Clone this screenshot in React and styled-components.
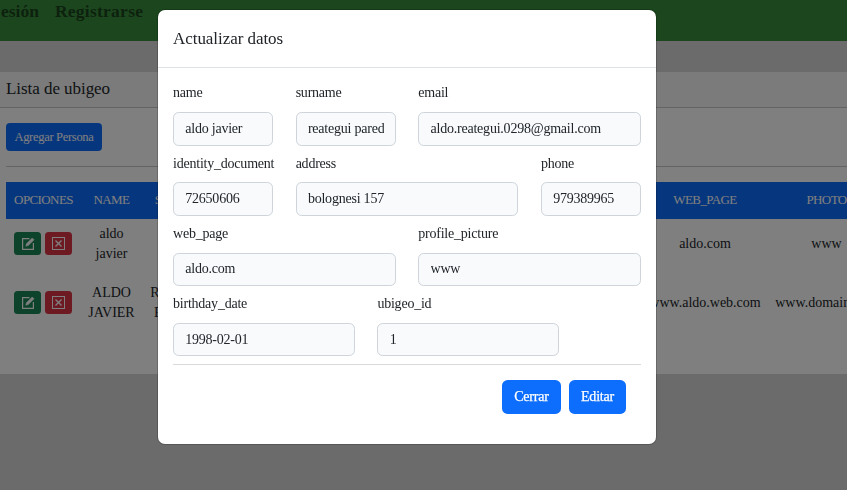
import React from "react";
import styled, { createGlobalStyle } from "styled-components";

const GlobalStyle = createGlobalStyle`
  *, *::before, *::after { box-sizing: border-box; }
  html, body { margin: 0; height: 490px; overflow: hidden; }
  body {
    background: #d6d6d6;
    color: #212529;
    font-family: "Liberation Serif", "Times New Roman", serif;
    font-size: 14px;
    line-height: 20.25px;
  }
`;

const Page = styled.div`
  width: 847px;
  height: 490px;
  overflow: hidden;
`;

const Navbar = styled.nav`
  height: 41px;
  display: flex;
  gap: 16px;
  background: #388e3c;
  color: #1b431d;
  font-size: 17.5px;
  font-weight: 700;
  line-height: 22px;
  white-space: nowrap;
`;

const NavLink = styled.a`
  letter-spacing: ${(p) => p.$spacing};
  margin-left: ${(p) => p.$shift || "0"};
`;

const Card = styled.section`
  margin-top: 31px;
  height: 302px;
  background: #fff;
`;

const CardHeader = styled.header`
  height: 36px;
  padding: 5px 6px 0;
  border-bottom: 1px solid #c8c8c8;
  background: #f7f7f7;
  font-size: 17px;
  line-height: 24px;
  letter-spacing: -0.05px;
`;

const CardBody = styled.div`
  padding: 15px 0 0 6px;
`;

const Toolbar = styled.div`
  height: 44px;
  border-bottom: 1px solid #c8c8c8;
  margin-bottom: 15px;
`;

const AddButton = styled.button`
  display: block;
  width: 96px;
  height: 28px;
  padding: 0;
  border: 0;
  border-radius: 4px;
  background: #0d6efd;
  color: #fff;
  font: 12.5px/28px "Liberation Serif", serif;
  letter-spacing: -0.3px;
`;

const Row = styled.div`
  display: grid;
  grid-template-columns: 75px 61px 85px 414px 128px 115px;
  width: 878px;
  height: ${(p) => p.$height};
  align-items: center;
  text-align: center;
  color: ${(p) => (p.$head ? "#fff" : "#212529")};
  background: ${(p) => (p.$head ? "#0d6efd" : "transparent")};
  font-size: ${(p) => (p.$head ? "13px" : "14px")};
  letter-spacing: ${(p) => (p.$head ? "-0.6px" : "normal")};
  padding-bottom: ${(p) => (p.$head ? "2px" : "0")};
`;

const Cell = styled.div`
  padding-top: 0.6px;
  white-space: pre-line;
`;

const Actions = styled.div`
  display: flex;
  gap: 4px;
  padding-left: 8px;
`;

const ActionButton = styled.button`
  display: flex;
  align-items: center;
  justify-content: center;
  width: 27px;
  height: 23px;
  padding: 0;
  border: 0;
  border-radius: 3.5px;
  color: #fff;
  background: ${(p) => (p.$danger ? "#dc3545" : "#198754")};
`;

const Backdrop = styled.div`
  position: fixed;
  inset: 0;
  display: flex;
  justify-content: flex-start;
  align-items: flex-start;
  padding: 10px 0 0 158px;
  background: rgba(0, 0, 0, 0.5);
`;

const Dialog = styled.div`
  width: 498px;
  height: 434px;
  border-radius: 7px;
  background: #fff;
  box-shadow: 0 0 0 1px rgba(0, 0, 0, 0.18);
`;

const DialogHeader = styled.header`
  height: 58px;
  padding: 17px 15px 0;
  border-bottom: 1px solid #dee2e6;
  font-size: 17px;
  line-height: 24px;
  letter-spacing: -0.05px;
`;

const Form = styled.form`
  margin: 0 15px;
  padding-top: 16.25px;
  height: 297px;
  display: grid;
  grid-template-columns: repeat(12, 18.375px);
  grid-auto-rows: 61.25px;
  column-gap: 22.5px;
  row-gap: 9px;
  border-bottom: 1px solid #d9dadb;
`;

const Field = styled.label`
  grid-column: span ${(p) => p.$span};
  min-width: 0;
  white-space: nowrap;
`;

const FieldName = styled.span`
  display: block;
  height: 20.25px;
  margin-bottom: 7.5px;
  line-height: 18.6px;
  letter-spacing: -0.22px;
`;

const Input = styled.input`
  display: block;
  width: 100%;
  height: 33.5px;
  padding: 0 11.25px;
  border: 1px solid #ced4da;
  border-radius: 5.6px;
  background: #f8fafc;
  color: #212529;
  font: 14px/20.25px "Liberation Serif", serif;
  letter-spacing: -0.22px;
  outline: 0;
`;

const DialogFooter = styled.footer`
  display: flex;
  justify-content: flex-end;
  gap: 8px;
  padding: 15px 30px 0;
`;

const DialogButton = styled.button`
  width: ${(p) => p.$width};
  height: 34px;
  padding: 0;
  border: 0;
  border-radius: 5.6px;
  background: #0d6efd;
  color: #fff;
  font: 14px/34px "Liberation Serif", serif;
  letter-spacing: -0.2px;
  -webkit-text-stroke: 0.25px #fff;
`;

const EditIcon = () => (
  <svg width="14" height="14" viewBox="0 0 14 14" fill="none" stroke="currentColor" strokeWidth="1.2">
    <path d="M8.5 1.6H1.6v10.8h10.8V6" />
    <path d="M4.8 9.2l.6-2.5L11.2.9l1.9 1.9-5.8 5.8z" fill="currentColor" strokeWidth=".5" />
  </svg>
);

const RemoveIcon = () => (
  <svg width="14" height="14" viewBox="0 0 14 14" fill="none" stroke="currentColor" strokeWidth="1">
    <rect x=".5" y=".5" width="12" height="12" />
    <path d="M3.5 3.5l6 6M9.5 3.5l-6 6" strokeWidth="1.4" />
  </svg>
);

const fields = [
  { name: "name", value: "aldo javier", span: 3 },
  { name: "surname", value: "reategui pared", span: 3 },
  { name: "email", value: "aldo.reategui.0298@gmail.com", span: 6 },
  { name: "identity_document", value: "72650606", span: 3 },
  { name: "address", value: "bolognesi 157", span: 6 },
  { name: "phone", value: "979389965", span: 3 },
  { name: "web_page", value: "aldo.com", span: 6 },
  { name: "profile_picture", value: "www", span: 6 },
  { name: "birthday_date", value: "1998-02-01", span: 5 },
  { name: "ubigeo_id", value: "1", span: 5 },
];

const people = [
  { name: "aldo\njavier", surname: "reategui\nparedes", web: "aldo.com", photo: "www", height: "49px" },
  { name: "ALDO\nJAVIER", surname: "REATEGUI\nPAREDES", web: "www.aldo.web.com", photo: "www.domain.com", height: "69px" },
];

export default function App() {
  return (
    <Page>
      <GlobalStyle />
      <Navbar>
        <NavLink $spacing="0px" $shift="1px">esión</NavLink>
        <NavLink $spacing="0.25px">Registrarse</NavLink>
      </Navbar>
      <Card>
        <CardHeader>Lista de ubigeo</CardHeader>
        <CardBody>
          <Toolbar>
            <AddButton>Agregar Persona</AddButton>
          </Toolbar>
          <Row $head $height="37px">
            <Cell>OPCIONES</Cell>
            <Cell>NAME</Cell>
            <Cell>SURNAME</Cell>
            <Cell />
            <Cell>WEB_PAGE</Cell>
            <Cell>PHOTO</Cell>
          </Row>
          {people.map((p) => (
            <Row key={p.name} $height={p.height}>
              <Actions>
                <ActionButton><EditIcon /></ActionButton>
                <ActionButton $danger><RemoveIcon /></ActionButton>
              </Actions>
              <Cell>{p.name}</Cell>
              <Cell>{p.surname}</Cell>
              <Cell />
              <Cell>{p.web}</Cell>
              <Cell>{p.photo}</Cell>
            </Row>
          ))}
        </CardBody>
      </Card>
      <Backdrop>
        <Dialog>
          <DialogHeader>Actualizar datos</DialogHeader>
          <Form>
            {fields.map((f) => (
              <Field key={f.name} $span={f.span}>
                <FieldName>{f.name}</FieldName>
                <Input defaultValue={f.value} />
              </Field>
            ))}
          </Form>
          <DialogFooter>
            <DialogButton $width="59px">Cerrar</DialogButton>
            <DialogButton $width="57px">Editar</DialogButton>
          </DialogFooter>
        </Dialog>
      </Backdrop>
    </Page>
  );
}
